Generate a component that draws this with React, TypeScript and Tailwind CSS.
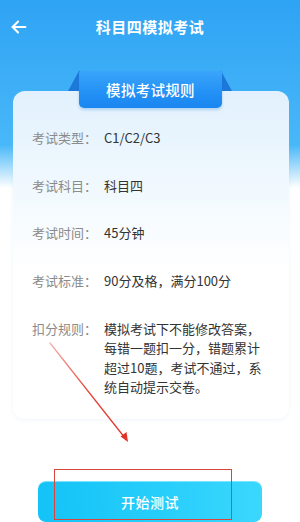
import React from "react";

const rows: { label: string; value: string }[] = [
  { label: "考试类型：", value: "C1/C2/C3" },
  { label: "考试科目：", value: "科目四" },
  { label: "考试时间：", value: "45分钟" },
  { label: "考试标准：", value: "90分及格，满分100分" },
  { label: "扣分规则：", value: "模拟考试下不能修改答案，每错一题扣一分，错题累计超过10题，考试不通过，系统自动提示交卷。" },
];

export default function App() {
  return (
    <div
      className="relative w-[300px] h-[522px] overflow-hidden bg-[linear-gradient(180deg,#2fa3f4_0px,#3fb0f7_90px,#48b8f9_145px,#ffffff_188px)]"
      style={{ fontFamily: '"Noto Sans CJK SC", "Noto Sans", sans-serif' }}
    >
      {/* Header */}
      <div className="relative h-[54px] flex items-center justify-center">
        <svg
          className="absolute left-[8px] top-[15px]"
          width="22"
          height="24"
          viewBox="0 0 24 24"
          fill="none"
          stroke="white"
          strokeWidth="2.2"
          strokeLinecap="round"
          strokeLinejoin="round"
        >
          <path d="M19 12H5" />
          <path d="M11 6l-6 6 6 6" />
        </svg>
        <span className="text-white text-[15px] font-bold tracking-[0.5px]">科目四模拟考试</span>
      </div>

      {/* Tab back wings */}
      <div className="relative z-10 mt-[17px] flex justify-center h-[20px]">
        <div className="w-[164px] h-[20px] bg-[#1c79d9] [clip-path:polygon(11px_0,153px_0,164px_20px,0_20px)]" />
      </div>

      {/* Card */}
      <div className="relative mx-[13px] w-[276px] rounded-[12px] bg-[linear-gradient(180deg,#e1f1fd_0%,#f1f9fe_30%,#ffffff_55%)] shadow-[0_1px_4px_rgba(150,180,210,0.15)] pt-[37px] pb-[23px] pl-[19px] pr-[20px]">
        <div className="absolute z-20 left-[66px] -top-[20px] w-[143px] h-[37px] rounded-t-[2px] rounded-b-[5px] bg-[linear-gradient(180deg,#3ba5fb_0%,#2290f5_60%,#1a86f1_100%)] shadow-[0_2px_3px_rgba(20,110,210,0.25)] flex items-center justify-center">
          <span className="text-white text-[14.5px] font-medium tracking-[0.3px]">模拟考试规则</span>
        </div>
        <div className="flex flex-col gap-[28.3px]">
          {rows.map((r) => (
            <div key={r.label} className="flex text-[13px] leading-[19.4px]">
              <span className="w-[72px] shrink-0 text-[#8b8b8b] whitespace-nowrap">{r.label}</span>
              <span className="flex-1 text-[#333333]">{r.value}</span>
            </div>
          ))}
        </div>
      </div>

      {/* Button */}
      <div className="mt-[62px] flex justify-center">
        <button className="w-[224px] h-[41px] rounded-[8px] bg-[linear-gradient(90deg,#14c3f7_0%,#25cdfa_50%,#3bd7fd_100%)] border-t border-[#7fe3fd] text-white text-[14px] font-medium flex items-center justify-center tracking-[0.5px]">
          开始测试
        </button>
      </div>

      {/* Annotation overlays */}
      <div className="absolute left-[54px] top-[469px] w-[178px] h-[51px] border-[1.5px] border-[#d8453b]" />
      <svg className="absolute left-0 top-0 pointer-events-none" width="300" height="522">
        <defs>
          <linearGradient id="arr" x1="50" y1="343" x2="128" y2="442" gradientUnits="userSpaceOnUse">
            <stop offset="0" stopColor="#f4b4ae" />
            <stop offset="0.5" stopColor="#e5483e" />
            <stop offset="1" stopColor="#e0332a" />
          </linearGradient>
        </defs>
        <line x1="50" y1="343" x2="125" y2="438" stroke="url(#arr)" strokeWidth="1.3" strokeLinecap="round" />
        <polygon points="128,442 120.5,436.5 126.5,432" fill="#e0332a" />
      </svg>
    </div>
  );
}
